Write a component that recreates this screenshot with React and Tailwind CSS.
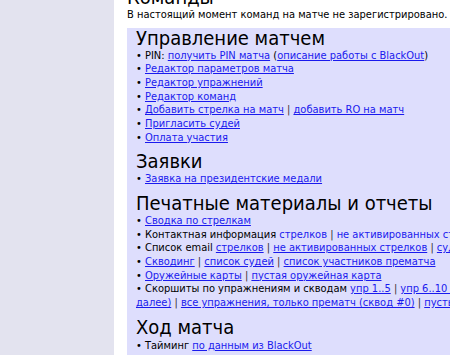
import React from "react";

const A = ({ children }) => (
  <a href="#" className="text-[#1a1aee] underline underline-offset-1">{children}</a>
);
const Sep = () => <span className="text-[#333]"> | </span>;
const Li = ({ children }) => (
  <div className="whitespace-nowrap">• {children}</div>
);
const H = ({ children, first }) => (
  <div className={`text-[20px] leading-[20px] mb-[1px] text-black ${first ? "" : "mt-[7px]"}`}>{children}</div>
);

export default function App() {
  return (
    <div
      className="w-[450px] h-[355px] overflow-hidden flex bg-white text-black"
      style={{ fontFamily: '"DejaVu Sans Condensed", "DejaVu Sans", Verdana, sans-serif', fontStretch: "condensed" }}
    >
      <div className="w-[114px] shrink-0 bg-[#e3e3ef]" />
      <div className="pl-[13px] shrink-0 w-[560px] mt-[-13px] text-[11px] leading-[13.67px]">
        <div className="text-[20px] leading-[20px]">Команды</div>
        <div className="mt-[1px]">В настоящий момент команд на матче не зарегистрировано.</div>
        <div className="mt-[6px] bg-[#dedefd] pl-[9px] pt-0 pb-[10px] w-[360px]">
          <H first>Управление матчем</H>
          <Li>PIN: <A>получить PIN матча</A> (<A>описание работы с BlackOut</A>)</Li>
          <Li><A>Редактор параметров матча</A></Li>
          <Li><A>Редактор упражнений</A></Li>
          <Li><A>Редактор команд</A></Li>
          <Li><A>Добавить стрелка на матч</A><Sep /><A>добавить RO на матч</A></Li>
          <Li><A>Пригласить судей</A></Li>
          <Li><A>Оплата участия</A></Li>
          <H>Заявки</H>
          <Li><A>Заявка на президентские медали</A></Li>
          <H>Печатные материалы и отчеты</H>
          <Li><A>Сводка по стрелкам</A></Li>
          <Li>Контактная информация <span className="text-[#1a1aee]">стрелков</span><Sep /><span className="text-[#1a1aee]">не активированных стрелков</span><Sep /><span className="text-[#1a1aee]">судей</span></Li>
          <Li>Список email <A>стрелков</A><Sep /><A>не активированных стрелков</A><Sep /><A>судей</A></Li>
          <Li><A>Скводинг</A><Sep /><A>список судей</A><Sep /><A>список участников прематча</A></Li>
          <Li><A>Оружейные карты</A><Sep /><A>пустая оружейная карта</A></Li>
          <Li>Скоршиты по упражнениям и скводам <A>упр 1..5</A><Sep /><A>упр 6..10 (и<br />далее)</A><Sep /><A>все упражнения, только прематч (сквод #0)</A><Sep /><A>пустые скоршиты</A></Li>
          <H>Ход матча</H>
          <div className="mt-[2px]"><Li>Тайминг <A>по данным из BlackOut</A></Li></div>
        </div>
      </div>
    </div>
  );
}
